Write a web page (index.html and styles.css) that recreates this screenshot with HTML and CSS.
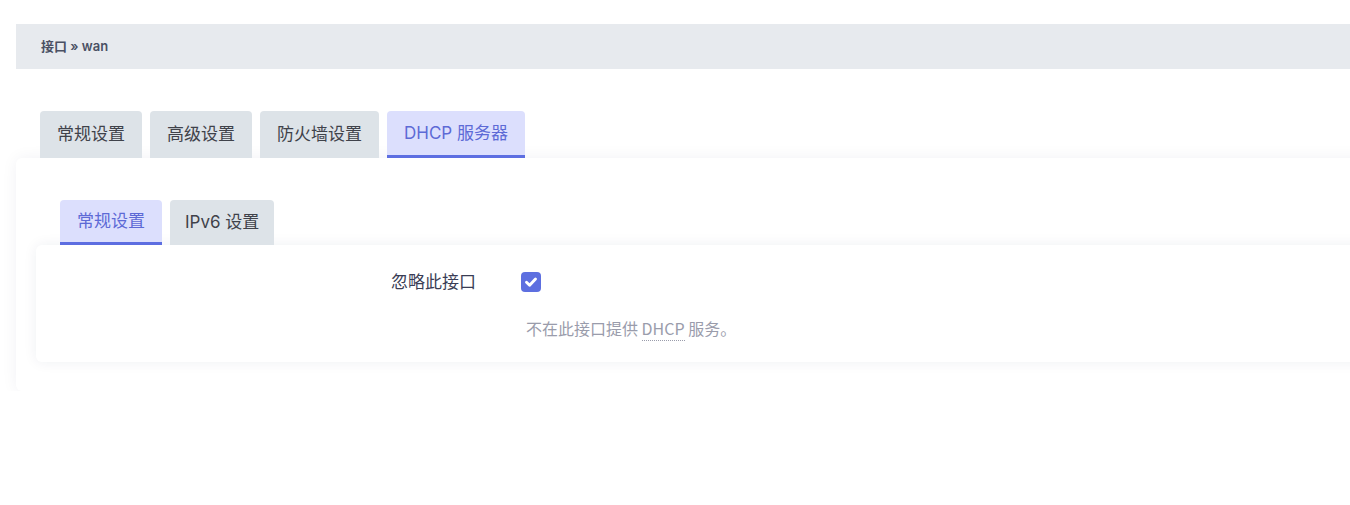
FILE: index.html
```html
<!DOCTYPE html>
<html lang="zh-CN">
<head>
<meta charset="utf-8">
<title>接口 » wan</title>
<link rel="stylesheet" href="styles.css">
</head>
<body>
<div class="main">
  <div class="breadcrumb">接口 » wan</div>
  <ul class="tabs">
    <li class="tab">常规设置</li>
    <li class="tab">高级设置</li>
    <li class="tab">防火墙设置</li>
    <li class="tab active">DHCP 服务器</li>
  </ul>
  <div class="card">
    <ul class="tabs sub">
      <li class="tab active">常规设置</li>
      <li class="tab narrow">IPv6 设置</li>
    </ul>
    <div class="inner">
      <div class="row">
        <label class="label">忽略此接口</label>
        <div class="value">
          <span class="checkbox">
            <svg viewBox="0 0 20 20" width="20" height="20"><path d="M5.5 10.3 L8.6 13.3 L14.5 7" fill="none" stroke="#fff" stroke-width="2.9" stroke-linecap="round" stroke-linejoin="round"/></svg>
          </span>
        </div>
      </div>
      <div class="desc">不在此接口提供 <abbr class="abbr">DHCP</abbr> 服务。</div>
    </div>
  </div>
</div>
</body>
</html>
```
FILE: styles.css
```css
html, body {
  margin: 0;
  padding: 0;
  background: #fff;
  overflow: hidden;
}
body {
  font-family: Inter, "Noto Sans CJK SC", "Noto Sans", sans-serif;
  color: #3b3f4c;
}
.main {
  margin: 24px -40px 0 16px;
}
.breadcrumb {
  height: 45px;
  line-height: 45px;
  background: #e7eaee;
  padding-left: 25px;
  font-size: 13px;
  font-weight: 600;
  color: #4a5063;
}
.tabs {
  list-style: none;
  margin: 42px 0 0 24px;
  padding: 0;
  display: flex;
  gap: 8px;
}
.tab {
  height: 47px;
  line-height: 46px;
  padding: 0 17px;
  font-size: 17px;
  background: #dde3e8;
  color: #3f424a;
  border-radius: 4px 4px 0 0;
  box-sizing: border-box;
}
.tab.active {
  background: #dcdffd;
  color: #5d6ad6;
  border-bottom: 3px solid #5d6ee1;
  line-height: 44px;
}
.card {
  background: #fff;
  border-radius: 6px;
  box-shadow: 0 0 16px rgba(30, 40, 80, 0.06);
  padding: 42px 20px 29px;
}
.tabs.sub {
  margin: 0 0 0 24px;
}
.tabs.sub .tab {
  height: 45px;
  line-height: 44px;
  padding: 0 17px;
}
.tabs.sub .tab.active {
  line-height: 42px;
}
.tabs.sub .tab.narrow {
  padding: 0 15px;
}
.inner {
  background: #fff;
  border-radius: 6px;
  box-shadow: 0 0 14px rgba(30, 40, 80, 0.07);
  padding: 27px 0 22px;
}
.row {
  display: grid;
  grid-template-columns: 440px 1fr;
  column-gap: 45px;
  align-items: center;
}
.label {
  text-align: right;
  font-size: 17px;
  color: #3a3d55;
  line-height: 20px;
}
.value {
  display: flex;
  align-items: center;
}
.checkbox {
  width: 20px;
  height: 20px;
  border-radius: 4px;
  background: #5d6fe0;
  display: block;
}
.checkbox svg {
  display: block;
}
.desc {
  margin: 26px 0 2px 490px;
  font-family: "Noto Sans CJK SC", sans-serif;
  font-size: 16px;
  line-height: 20px;
  color: #9a9cab;
}
.abbr {
  text-decoration: none;
  border-bottom: 1px dotted #9a9cab;
}
```
